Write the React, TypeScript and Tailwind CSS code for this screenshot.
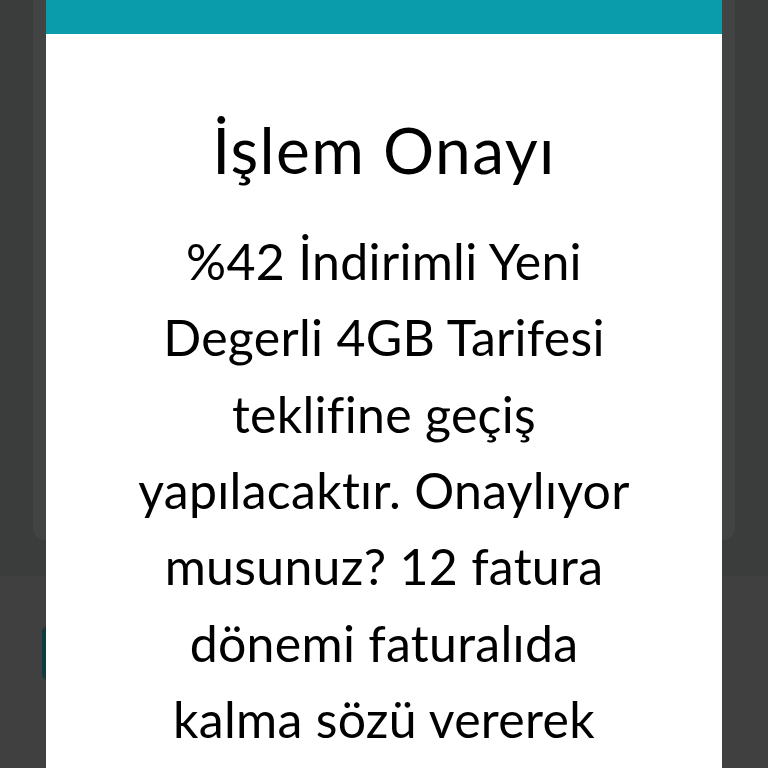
const lines = [
  "%42 İndirimli Yeni",
  "Degerli 4GB Tarifesi",
  "teklifine geçiş",
  "yapılacaktır. Onaylıyor",
  "musunuz? 12 fatura",
  "dönemi faturalıda",
  "kalma sözü vererek",
];

const App = () => {
  return (
    <div className="relative w-full h-[768px] overflow-hidden bg-[#3b3c3c] font-['Lato','Noto_Sans',sans-serif]">
      {/* Background page, dimmed */}
      <div className="flex flex-col h-full">
        <div className="px-[33px] pb-[36px]">
          <div className="h-[540px] rounded-b-xl bg-[#424343]" />
        </div>
        <div className="flex-1 bg-[#404040] pt-[50px] px-[42px]">
          <div className="h-[54px] w-[120px] rounded-md bg-[#0f3a3f]" />
        </div>
      </div>

      {/* Modal */}
      <div className="absolute left-[46px] top-0 w-[676px] h-[768px] bg-white flex flex-col">
        <div className="h-[34px] bg-[#0a9cab]" />
        <div className="flex flex-col items-center pt-[84px] text-black">
          <h1 className="text-[64px] leading-none font-normal tracking-[1.4px]">İşlem Onayı</h1>
          <p className="mt-[41px] text-[50px] leading-[76.33px] tracking-[0.3px] text-center">
            {lines.map((l) => (
              <span key={l} className="block">
                {l}
              </span>
            ))}
          </p>
        </div>
      </div>
    </div>
  );
};

export default App;
